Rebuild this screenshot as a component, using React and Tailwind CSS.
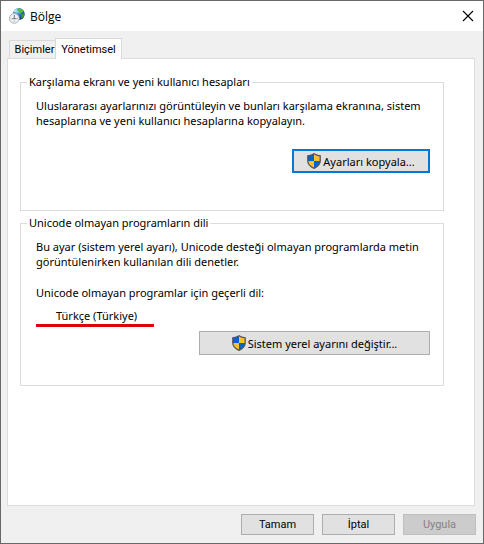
import { clsx } from "clsx";

function RegionIcon() {
  return (
    <svg className="size-4 shrink-0" viewBox="0 0 16 16" aria-hidden="true">
      <defs>
        <radialGradient id="globe" cx="0.35" cy="0.25" r="0.85">
          <stop offset="0" stopColor="#a8e4fa" />
          <stop offset="0.4" stopColor="#2f7fd0" />
          <stop offset="1" stopColor="#0a2480" />
        </radialGradient>
      </defs>
      <circle cx="9.8" cy="6" r="5.9" fill="url(#globe)" />
      <path d="M9 .6c2-.6 4.200 .2 5.300 1.800l-.5 1.800-1.600.4-.7 1.500-1.800-1.100.5-1.600-1.800-.6z" fill="#5cbb35" />
      <path d="M12.300 6.200l2.700-.7.500 1.300-1 2.700-1.600 1.300-.8-2.200z" fill="#379a2c" />
      <path d="M5.200 2.500l1.800-1.300.8.9-1.200 1.700-1.900.4z" fill="#b9efd0" />
      <circle cx="5.300" cy="10.400" r="4.900" fill="#eef0f2" stroke="#a4abb1" strokeWidth="0.9" />
      <path d="M5.300 7v3.700M3 10.700h4.600" stroke="#6d767e" strokeWidth="1" fill="none" />
      <path d="M5.300 12.800v1.200M1.600 10.500h.8M8.300 10.500h.8" stroke="#8f979e" strokeWidth="0.700" />
    </svg>
  );
}

function ShieldIcon() {
  return (
    <svg className="h-4 w-[14px] shrink-0" viewBox="0 0 14 16" aria-hidden="true">
      <defs>
        <clipPath id="shield">
          <path d="M7 .8C8.800 2.200 10.800 2.700 13.200 2.800V8c0 3.300-2.400 5.600-6.200 7.300C3.200 13.600.8 11.300.8 8V2.800C3.200 2.700 5.200 2.200 7 .8z" />
        </clipPath>
      </defs>
      <g clipPath="url(#shield)">
        <path d="M0 0h7v8H0zM7 8h7v8H7z" fill="#0063cc" />
        <path d="M7 0h7v8H7zM0 8h7v8H0z" fill="#ffbf2f" />
      </g>
      <path
        d="M7 .8C8.800 2.200 10.800 2.700 13.200 2.800V8c0 3.300-2.400 5.600-6.200 7.300C3.200 13.600.8 11.300.8 8V2.800C3.200 2.700 5.200 2.200 7 .8z"
        fill="none"
        stroke="#50555a"
        strokeWidth="1.300"
      />
    </svg>
  );
}

function Group({ title, className, children }) {
  return (
    <fieldset className={clsx("min-w-0 border border-[#dcdcdc] px-[15px]", className)}>
      <legend className="-ml-[9px] px-[2px] leading-4">{title}</legend>
      {children}
    </fieldset>
  );
}

function ActionButton({ className, children }) {
  return (
    <button
      type="button"
      className={clsx("flex h-6 items-center justify-center gap-[2px] bg-[#e1e1e1] whitespace-nowrap", className)}
    >
      <ShieldIcon />
      {children}
    </button>
  );
}

function FooterButton({ disabled, children }) {
  return (
    <button
      type="button"
      disabled={disabled}
      className="h-[21px] w-[73px] border border-[#adadad] bg-[#e1e1e1] font-['Roboto',sans-serif] disabled:border-[#bfbfbf] disabled:bg-[#cccccc] disabled:text-[#838383]"
    >
      {children}
    </button>
  );
}

export default function App() {
  return (
    <div className="flex min-h-screen flex-col border border-[#68686c] bg-[#f0f0f0] font-['Noto_Sans','Open_Sans',sans-serif] text-[11px] leading-[15px] text-black">
      <header className="flex h-[30px] items-center justify-between bg-white pr-[9px] pl-2">
        <div className="flex items-center gap-[5px]">
          <RegionIcon />
          <h1 className="font-['Open_Sans',sans-serif] text-[12px]">Bölge</h1>
        </div>
        <button type="button" aria-label="Kapat">
          <svg className="size-3" viewBox="0 0 12 12" aria-hidden="true">
            <path d="M1 1l10 10M11 1L1 11" stroke="#000" strokeWidth="1.100" />
          </svg>
        </button>
      </header>

      <main className="flex flex-1 flex-col pt-[7px] pr-2 pl-[6px]">
        <div role="tablist" className="flex items-end pl-[2px] font-['Roboto',sans-serif]">
          <button
            type="button"
            role="tab"
            aria-selected="false"
            className="h-[18px] w-[46px] border border-r-0 border-b-0 border-[#d9d9d9] pl-1"
          >
            Biçimler
          </button>
          <button
            type="button"
            role="tab"
            aria-selected="true"
            className="relative -mb-px h-[21px] w-[67px] border border-b-0 border-[#d9d9d9] bg-white"
          >
            Yönetimsel
          </button>
        </div>

        <div role="tabpanel" className="flex-1 border border-[#dcdcdc] bg-white pt-[15px] pr-[30px] pl-3">
          <Group title="Karşılama ekranı ve yeni kullanıcı hesapları" className="pb-[37px]">
            <p className="mt-2 whitespace-nowrap">
              Uluslararası ayarlarınızı görüntüleyin ve bunları karşılama ekranına, sistem
              <br />
              hesaplarına ve yeni kullanıcı hesaplarına kopyalayın.
            </p>
            <div className="-mr-[2px] mt-[21px] flex justify-end">
              <ActionButton className="w-[138px] border-2 border-[#0078d7]">Ayarları kopyala...</ActionButton>
            </div>
          </Group>

          <Group title="Unicode olmayan programların dili" className="mt-1 pb-[30px]">
            <p className="mt-2 whitespace-nowrap">
              Bu ayar (sistem yerel ayarı), Unicode desteği olmayan programlarda metin
              <br />
              görüntülenirken kullanılan dili denetler.
            </p>
            <p className="mt-4">Unicode olmayan programlar için geçerli dil:</p>
            <p className="mt-2 w-[118px] border-b-3 border-[#e1000a] pb-px pl-5 whitespace-nowrap">Türkçe (Türkiye)</p>
            <div className="-mr-[2px] mt-1 flex justify-end">
              <ActionButton className="w-[231px] border border-[#adadad]">Sistem yerel ayarını değiştir...</ActionButton>
            </div>
          </Group>
        </div>
      </main>

      <footer className="flex justify-end gap-2 pt-2 pr-[7px] pb-2">
        <FooterButton>Tamam</FooterButton>
        <FooterButton>İptal</FooterButton>
        <FooterButton disabled>Uygula</FooterButton>
      </footer>
    </div>
  );
}
